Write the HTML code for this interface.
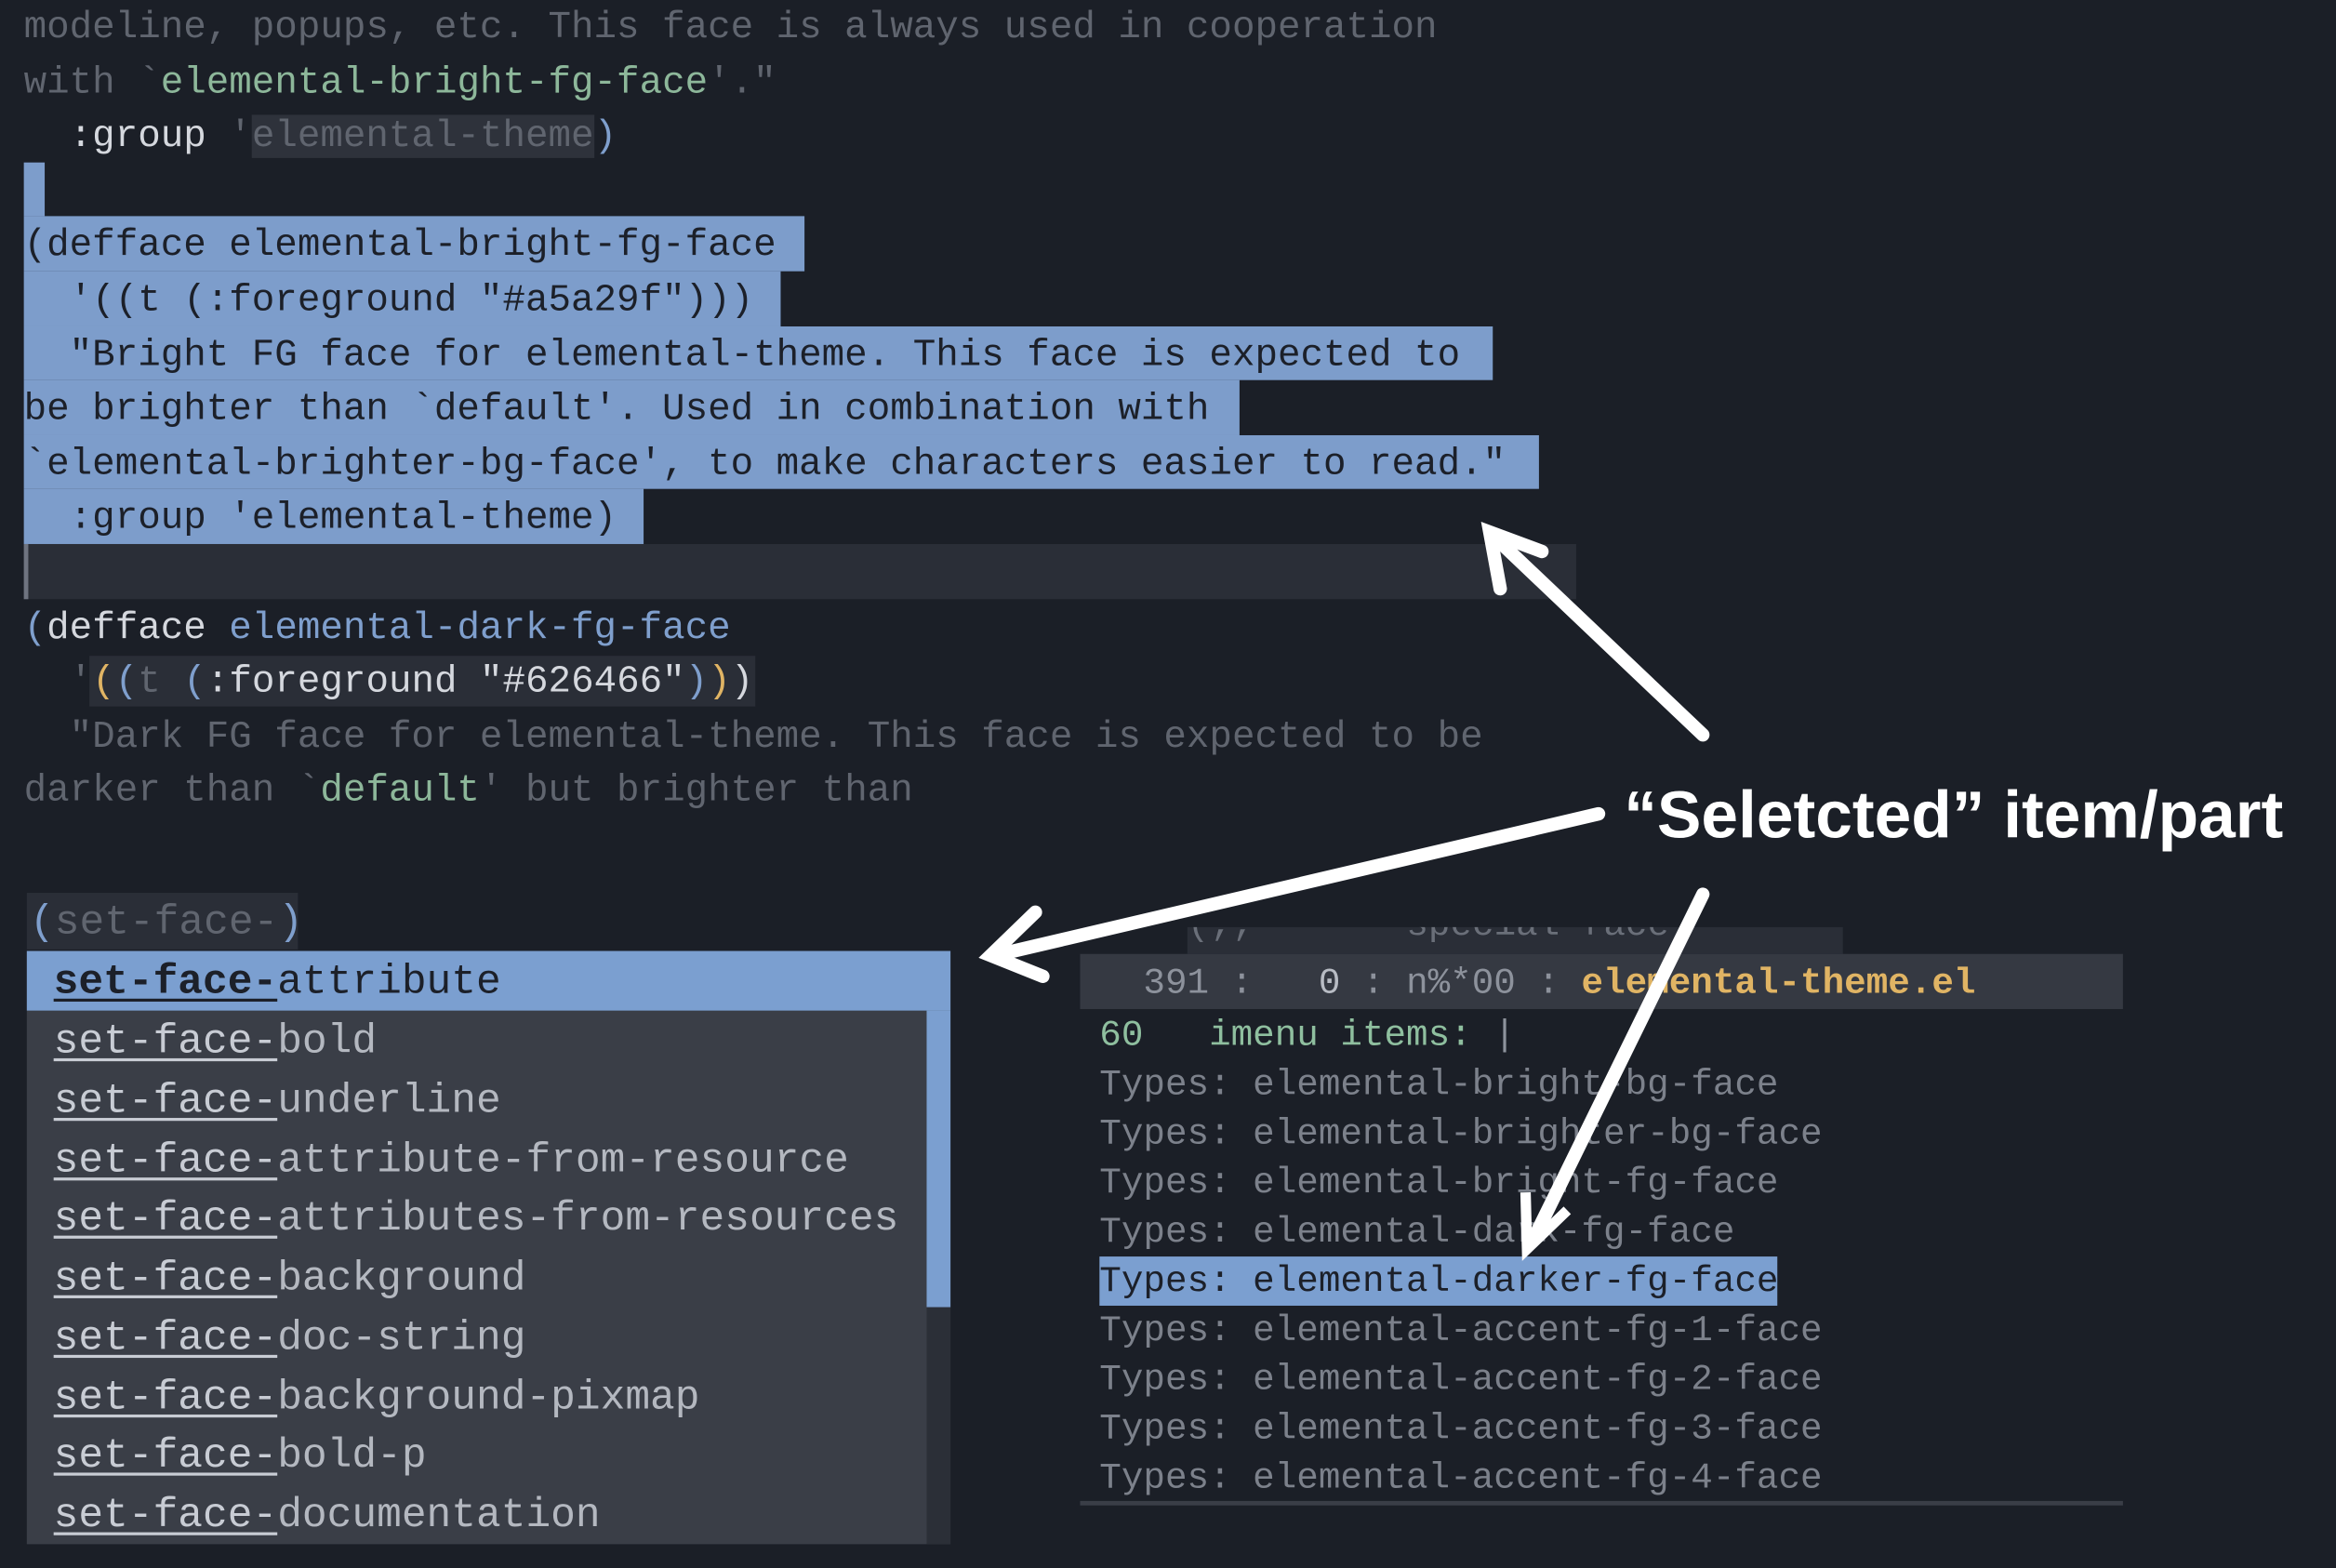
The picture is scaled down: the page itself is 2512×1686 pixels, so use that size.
<!DOCTYPE html>
<html><head><meta charset="utf-8"><style>
html,body{margin:0;padding:0;background:#1b1f27;overflow:hidden;width:2512px;height:1686px}
#w{position:absolute;left:0;top:0;width:1568px;height:1052px;transform:scale(1.60204,1.6027);transform-origin:0 0;background:#1b1f27;font-family:"Liberation Mono",monospace;}
.a{position:absolute;white-space:pre;}
.l{position:absolute;left:16px;font-size:25.5px;line-height:36.6px;height:36.6px;white-space:pre;color:#60656f;padding-top:2px;box-sizing:border-box}
.sel{position:absolute;left:16px;background:#7d9dcb;height:36.6px}
.st{color:#1c2029}
.g{color:#8db79a}.w{color:#d5d8de}.b{color:#7f9fcd}.y{color:#e0b464}
.pr{position:absolute;left:36px;font-size:27.8px;line-height:40px;white-space:pre;color:#b4b8c0;padding-top:2px}
.pr u{color:#c8ccd4;text-decoration-thickness:2px;text-underline-offset:4px}
.t{position:absolute;left:738px;font-size:24.5px;line-height:33px;white-space:pre;color:#7c818b;padding-top:2px}
</style></head><body><div id="w">
<div class="l" style="top:-1px">modeline, popups, etc. This face is always used in cooperation</div>
<div class="l" style="top:35.6px">with `<span class="g">elemental-bright-fg-face</span>'."</div>
<div class="l" style="top:72.2px"><span class="w">  :group </span>'<span style="background:#2e323b">elemental-theme</span><span class="b">)</span></div>
<div class="sel" style="top:108.8px;width:14px"></div>
<div class="sel" style="top:145.4px;width:524px"></div>
<div class="sel" style="top:182px;width:508px"></div>
<div class="sel" style="top:218.6px;width:986px"></div>
<div class="sel" style="top:255.2px;width:816px"></div>
<div class="sel" style="top:291.8px;width:1017px"></div>
<div class="sel" style="top:328.4px;width:416px"></div>
<div class="l st" style="top:145.4px">(defface elemental-bright-fg-face</div>
<div class="l st" style="top:182px">  '((t (:foreground "#a5a29f")))</div>
<div class="l st" style="top:218.6px">  "Bright FG face for elemental-theme. This face is expected to</div>
<div class="l st" style="top:255.2px">be brighter than `default'. Used in combination with</div>
<div class="l st" style="top:291.8px">`elemental-brighter-bg-face', to make characters easier to read."</div>
<div class="l st" style="top:328.4px">  :group 'elemental-theme)</div>
<div class="a" style="left:16px;top:365px;width:1042px;height:36.6px;background:#2a2e37"></div>
<div class="a" style="left:16px;top:365px;width:3px;height:36.6px;background:#6f7480"></div>
<div class="l" style="top:401.6px"><span class="b">(</span><span class="w">defface </span><span class="b">elemental-dark-fg-face</span></div>
<div class="a" style="left:60px;top:440px;width:447px;height:34px;background:#2a2e37"></div>
<div class="l" style="top:438.2px">  '<span class="y">(</span><span class="b">(</span>t <span class="b">(</span><span class="w">:foreground "#626466"</span><span class="b">)</span><span class="y">)</span><span class="w">)</span></div>
<div class="l" style="top:474.8px">  "Dark FG face for elemental-theme. This face is expected to be</div>
<div class="l" style="top:511.4px">darker than `<span class="g">default</span>' but brighter than</div>
<div class="a" style="left:18px;top:599px;width:182px;height:38px;background:#2a2e37"></div>
<div class="l" style="top:600px;left:20px;font-size:27.8px"><span class="b">(</span>set-face-<span class="b">)</span></div>
<div class="a" style="left:18px;top:638px;width:620px;height:398px;background:#3a3e47"></div>
<div class="a" style="left:18px;top:638px;width:620px;height:40px;background:#7b9fd0"></div>
<div class="a" style="left:622px;top:678px;width:16px;height:199px;background:#7b9fd0"></div>
<div class="a" style="left:622px;top:877px;width:16px;height:159px;background:#2b2f37"></div>
<div class="pr" style="top:638px;color:#1c2029"><u style="color:#1c2029;font-weight:bold">set-face-</u>attribute</div>
<div class="pr" style="top:678px"><u>set-face-</u>bold</div>
<div class="pr" style="top:718px"><u>set-face-</u>underline</div>
<div class="pr" style="top:758px"><u>set-face-</u>attribute-from-resource</div>
<div class="pr" style="top:797px"><u>set-face-</u>attributes-from-resources</div>
<div class="pr" style="top:837px"><u>set-face-</u>background</div>
<div class="pr" style="top:877px"><u>set-face-</u>doc-string</div>
<div class="pr" style="top:917px"><u>set-face-</u>background-pixmap</div>
<div class="pr" style="top:956px"><u>set-face-</u>bold-p</div>
<div class="pr" style="top:996px"><u>set-face-</u>documentation</div>
<div class="a" style="left:797px;top:622px;width:440px;height:18px;background:#2a2e37;overflow:hidden"><div class="a" style="top:-14px;left:0;font-size:24.5px;color:#6a6f79">(;; ----- special face -----</div></div>
<div class="a" style="left:725px;top:640px;width:700px;height:37px;background:#353942"></div>
<div class="t" style="top:642px;left:738px;color:#8d929c">  391 :   <span style="color:#b8bcc4">0</span> : n%*00 : <span class="y" style="font-weight:bold">elemental-theme.el</span></div>
<div class="t" style="top:677px;color:#8fbf9f">60   imenu items: <span style="color:#8d929c">|</span></div>
<div class="t" style="top:710px">Types: elemental-bright-bg-face</div>
<div class="t" style="top:743px">Types: elemental-brighter-bg-face</div>
<div class="t" style="top:776px">Types: elemental-bright-fg-face</div>
<div class="t" style="top:809px">Types: elemental-dark-fg-face</div>
<div class="a" style="left:738px;top:843px;width:455px;height:33px;background:#7b9fd0"></div>
<div class="t" style="top:842px;color:#1c2029">Types: elemental-darker-fg-face</div>
<div class="t" style="top:875px">Types: elemental-accent-fg-1-face</div>
<div class="t" style="top:908px">Types: elemental-accent-fg-2-face</div>
<div class="t" style="top:941px">Types: elemental-accent-fg-3-face</div>
<div class="t" style="top:974px">Types: elemental-accent-fg-4-face</div>
<div class="a" style="left:725px;top:1007px;width:700px;height:3px;background:#3a3e47"></div>
<svg class="a" style="left:0;top:0" width="1568" height="1052" viewBox="0 0 1568 1052">
<g stroke="#fff" stroke-width="9" fill="none" stroke-linecap="round" stroke-linejoin="miter">
<line x1="1143" y1="493" x2="1005" y2="362"/>
<polyline points="1007,395 1000,357 1035,370"/>
<line x1="1073" y1="546" x2="672" y2="640"/>
<polyline points="695,612 665,641 700,655"/>
<line x1="1143" y1="600" x2="1030" y2="830"/>
</g>
<polyline points="1024,800 1025,838 1052,812" stroke="#fff" stroke-width="7" fill="none"/>
<text x="1090" y="562" fill="#fff" font-family="Liberation Sans, sans-serif" font-size="44.5" font-weight="bold">“Seletcted” item/part</text>
</svg>
</div></body></html>
